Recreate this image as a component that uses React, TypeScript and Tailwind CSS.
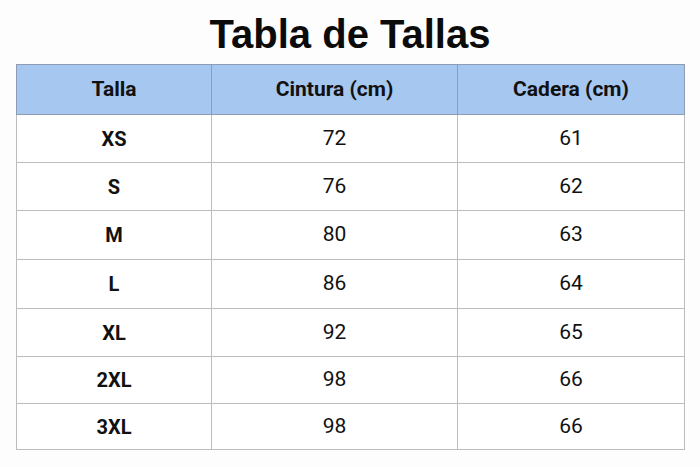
import React from "react";

const rows = [
  ["XS", "72", "61"],
  ["S", "76", "62"],
  ["M", "80", "63"],
  ["L", "86", "64"],
  ["XL", "92", "65"],
  ["2XL", "98", "66"],
  ["3XL", "98", "66"],
];

const heights = ["h-[48px]", "h-[48px]", "h-[49px]", "h-[49px]", "h-[48px]", "h-[47px]", "h-[46px]"];

export default function App() {
  return (
    <div className="w-[700px] h-[467px] bg-[#fdfdfd] overflow-hidden" style={{ fontFamily: "Roboto, 'Liberation Sans', sans-serif" }}>
      <div className="pt-[12px] h-[64px] text-center">
        <h1 className="text-[40px] leading-[44px] font-bold text-[#0b0b0b]" style={{ fontFamily: "'Liberation Sans', Arial, sans-serif" }}>
          Tabla de Tallas
        </h1>
      </div>
      <div className="ml-[16px] w-[668px]">
        <table className="border-collapse w-[668px] table-fixed">
          <colgroup>
            <col className="w-[195px]" />
            <col className="w-[246px]" />
            <col className="w-[227px]" />
          </colgroup>
          <thead>
            <tr className="h-[50px] bg-[#a6c7ef]">
              <th className="border border-[#8e9db3] text-[21px] font-bold text-[#111]">Talla</th>
              <th className="border border-[#8e9db3] text-[21px] font-bold text-[#111]">Cintura (cm)</th>
              <th className="border border-[#8e9db3] text-[21px] font-bold text-[#111]">Cadera (cm)</th>
            </tr>
          </thead>
          <tbody>
            {rows.map((r, i) => (
              <tr key={i} className={`${heights[i]} bg-white`}>
                <td className="border border-[#bcbcbc] text-center text-[20px] font-bold text-[#111]">{r[0]}</td>
                <td className="border border-[#bcbcbc] text-center text-[21px] text-[#111]">{r[1]}</td>
                <td className="border border-[#bcbcbc] text-center text-[21px] text-[#111]">{r[2]}</td>
              </tr>
            ))}
          </tbody>
        </table>
      </div>
    </div>
  );
}
